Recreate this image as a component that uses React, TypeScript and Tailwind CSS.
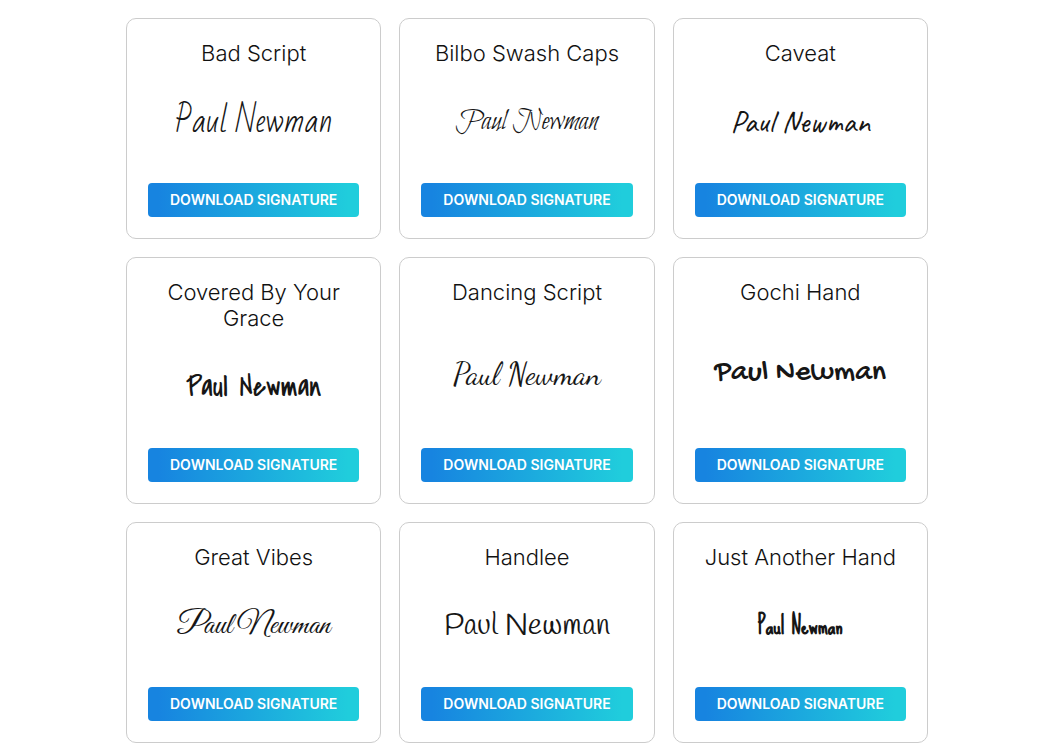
interface SignatureFont {
  title: string;
  style: string;
}

const name = "Paul Newman";

const fonts: SignatureFont[] = [
  { title: "Bad Script", style: "text-[31px] font-['Bad_Script','Lato',cursive]" },
  { title: "Bilbo Swash Caps", style: "text-[30px] font-['Bilbo_Swash_Caps','Liberation_Serif',cursive]" },
  { title: "Caveat", style: "text-[31px] font-['Caveat','Lato',cursive]" },
  { title: "Covered By Your Grace", style: "text-[30px] font-['Covered_By_Your_Grace','Lato',cursive]" },
  { title: "Dancing Script", style: "text-[30px] font-['Dancing_Script','Liberation_Serif',cursive]" },
  { title: "Gochi Hand", style: "text-[30px] font-['Gochi_Hand','Lato',cursive]" },
  { title: "Great Vibes", style: "text-[31px] font-['Great_Vibes','Liberation_Serif',cursive]" },
  { title: "Handlee", style: "text-[30px] font-['Handlee','Lato',cursive]" },
  { title: "Just Another Hand", style: "text-[24px] font-bold font-['Just_Another_Hand','Sue_Ellen_Francisco','Covered_By_Your_Grace',cursive]" },
];

function SignatureCard({ font }: { font: SignatureFont }) {
  return (
    <article className="flex flex-col rounded-[10px] border border-[#cccccc] bg-white p-[21px] text-center">
      <h2 className="text-[22px] leading-[26px] font-light text-[#111111]">{font.title}</h2>
      <div className="flex min-h-[117px] flex-1 items-center justify-center pb-[6px] text-[#161616]">
        <p className={`leading-10 whitespace-nowrap ${font.style}`}>{name}</p>
      </div>
      <button
        type="button"
        className="h-[34px] w-full cursor-pointer rounded-[4px] bg-linear-to-r/srgb from-[#1784e0] from-5% to-[#20cddc] to-95% text-[14px] leading-5 font-semibold whitespace-nowrap text-white uppercase"
      >
        Download Signature
      </button>
    </article>
  );
}

export default function App() {
  return (
    <main className="min-h-screen bg-white py-[18px] pr-[6px] font-['Inter',sans-serif]">
      <div className="mx-auto grid max-w-[802px] grid-cols-1 gap-[18px] sm:grid-cols-3">
        {fonts.map((font) => (
          <SignatureCard key={font.title} font={font} />
        ))}
      </div>
    </main>
  );
}
